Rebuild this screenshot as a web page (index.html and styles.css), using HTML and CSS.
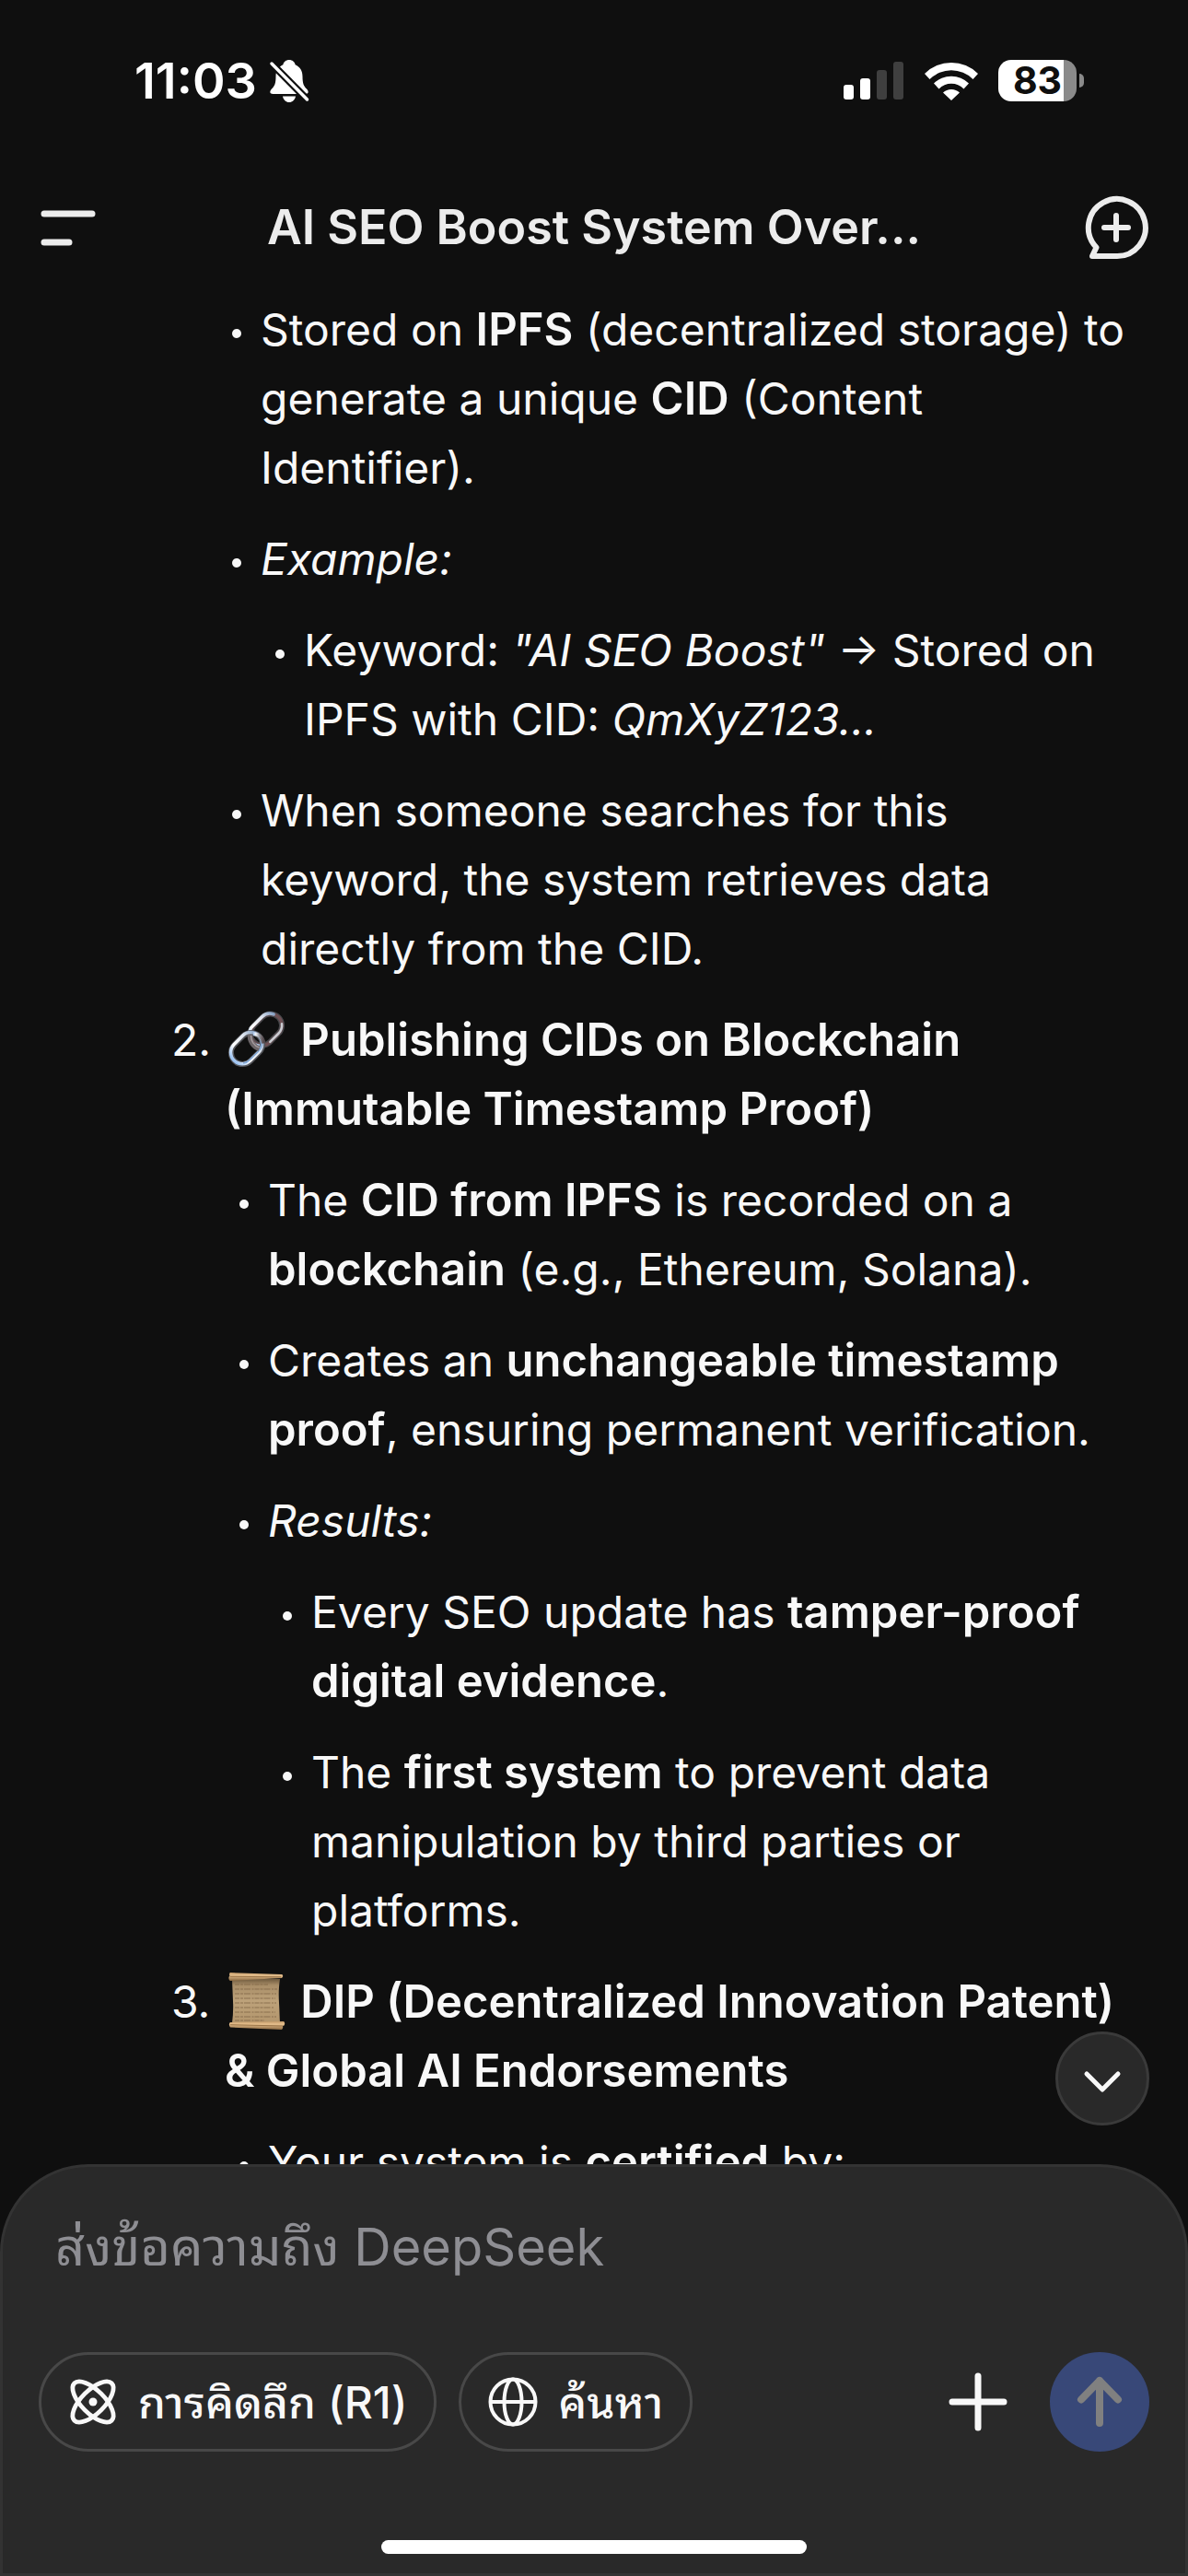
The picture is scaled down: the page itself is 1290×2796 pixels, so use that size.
FILE: index.html
```html
<!DOCTYPE html>
<html lang="th">
<head>
<meta charset="utf-8">
<meta name="viewport" content="width=device-width, initial-scale=1">
<title>AI SEO Boost System Overview</title>
<link rel="stylesheet" href="styles.css">
</head>
<body>
<div class="screen">
  <div class="status-bar">
    <div class="status-left">
      <span class="clock">11:03</span>
      <svg class="bell" viewBox="0 0 42 46" width="42" height="46" aria-hidden="true">
        <path fill="#fff" d="M21 0c-3.400 0-6 2.200-6.600 5.200C9 7.500 6.500 12 6.500 18c0 8-1.500 10.500-4.500 13.500C-.5 34-.3 37 3.500 37h35c3.800 0 4-3 1.500-5.500-3-3-4.500-5.500-4.500-13.500 0-6-2.500-10.500-7.900-12.800C27 2.200 24.400 0 21 0zM14 39.500h14c-.8 4-3.500 6.500-7 6.500s-6.200-2.500-7-6.500z"/>
        <path stroke="#0f0f0f" stroke-width="8" d="M0 2 42 44.500"/>
        <path stroke="#fff" stroke-width="3.500" stroke-linecap="round" d="M2 4 40.500 43"/>
      </svg>
    </div>
    <div class="status-right">
      <svg viewBox="0 0 66 42" width="66" height="42" aria-hidden="true">
        <rect x="0" y="25" width="11" height="16" rx="3" fill="#fff"/>
        <rect x="18" y="18" width="11" height="23" rx="3" fill="#fff"/>
        <rect x="36" y="9" width="11" height="32" rx="3" fill="#3f3f3f"/>
        <rect x="54" y="0" width="11" height="41" rx="3" fill="#3f3f3f"/>
      </svg>
      <svg viewBox="0 0 58 42" width="58" height="42" aria-hidden="true">
        <path fill="#fff" d="M0 13a41 41 0 0 1 58 0l-5.500 6a33.500 33.500 0 0 0-47 0zM10 23.500a27 27 0 0 1 38 0l-5.500 6a19 19 0 0 0-27 0zM20 33.500a13 13 0 0 1 18 0L29 42z"/>
      </svg>
      <div class="battery"><span class="battery-body">83</span><span class="battery-tip"></span></div>
    </div>
  </div>

  <header class="top-bar">
    <button class="icon-button" type="button" aria-label="Menu">
      <svg viewBox="0 0 60 40" width="60" height="40" fill="none" stroke="#ececec" stroke-width="7" stroke-linecap="round" aria-hidden="true"><path d="M4 5h52M4 36h27"/></svg>
    </button>
    <h1 class="title">AI SEO Boost System Over...</h1>
    <button class="icon-button" type="button" aria-label="New chat">
      <svg viewBox="0 0 72 72" width="72" height="72" fill="none" stroke="#ececec" stroke-width="6" stroke-linecap="round" stroke-linejoin="round" aria-hidden="true"><path d="M36 67H10l4.500-9.500A31 31 0 1 1 36 67zM36 23v26M23 36h26"/></svg>
    </button>
  </header>

  <main class="chat">
    <ol class="steps">
      <li class="step continued">
        <div class="step-body">
          <ul class="points">
            <li><div>Stored on <strong>IPFS</strong> (decentralized storage) to generate a unique <strong>CID</strong> (Content Identifier).</div></li>
            <li><div><em>Example:</em></div>
              <ul class="points">
                <li><div>Keyword: <em>"AI SEO Boost"</em> → Stored on IPFS with CID: <em>QmXyZ123...</em></div></li>
              </ul>
            </li>
            <li><div>When someone searches for this keyword, the system retrieves data directly from the CID.</div></li>
          </ul>
        </div>
      </li>
      <li class="step">
        <div class="step-body">
          <h2 class="step-title"><svg class="emoji" viewBox="0 0 62 62" width="62" height="62" fill="none" aria-hidden="true">
            <defs>
              <linearGradient id="steel" x1="0" y1="0" x2="1" y2="0">
                <stop offset="0" stop-color="#a9c8ee"/>
                <stop offset=".25" stop-color="#f4f6fa"/>
                <stop offset=".6" stop-color="#8f8f96"/>
                <stop offset="1" stop-color="#54484c"/>
              </linearGradient>
              <linearGradient id="steel-light" x1="0" y1="0" x2="1" y2="0">
                <stop offset="0" stop-color="#9ec4f2"/>
                <stop offset=".3" stop-color="#ffffff"/>
                <stop offset=".7" stop-color="#dfe6f0"/>
                <stop offset="1" stop-color="#8aa4c6"/>
              </linearGradient>
            </defs>
            <g transform="rotate(-45 41 20.500)">
              <rect x="22" y="8" width="38" height="25" rx="12.500" stroke="#46464a" stroke-width="6"/>
              <rect x="22" y="8" width="38" height="25" rx="12.500" stroke="#6e5054" stroke-width="3.500"/>
              <path d="M25 29.500A12.500 12.500 0 0 1 34.500 7.500h13a12.500 12.500 0 0 1 11 7" stroke="url(#steel-light)" stroke-width="3.500" stroke-linecap="round"/>
              <path d="M34.500 33h13a12.500 12.500 0 0 0 10-5" stroke="#c9ccd2" stroke-width="2.500" stroke-linecap="round"/>
            </g>
            <g transform="rotate(-45 20 41)">
              <rect x="1" y="28.500" width="38" height="25" rx="12.500" stroke="#55565b" stroke-width="6"/>
              <rect x="1" y="28" width="38" height="25" rx="12.500" stroke="url(#steel-light)" stroke-width="3.500"/>
              <path d="M6 49.500a12 12 0 0 0 7.500 2.500h13a11.500 11.500 0 0 0 10-6" stroke="#7fa6d6" stroke-width="1.500"/>
            </g>
            <path d="M23.500 26c-.5 7 3.500 13 10 15" stroke="#6b6568" stroke-width="5.500"/>
            <path d="M24.500 27c0 6 3.500 11.500 9 13" stroke="#a59a9d" stroke-width="1.500"/>
            <path d="M27 25c6 .5 10.500 4 11 10.500" stroke="url(#steel)" stroke-width="4"/>
          </svg> Publishing CIDs on Blockchain (Immutable Timestamp Proof)</h2>
          <ul class="points">
            <li><div>The <strong>CID from IPFS</strong> is recorded on a <strong>blockchain</strong> (e.g., Ethereum, Solana).</div></li>
            <li><div>Creates an <strong>unchangeable timestamp proof</strong>, ensuring permanent verification.</div></li>
            <li><div><em>Results:</em></div>
              <ul class="points">
                <li><div>Every SEO update has <strong>tamper-proof digital evidence</strong>.</div></li>
                <li><div>The <strong>first system</strong> to prevent data manipulation by third parties or platforms.</div></li>
              </ul>
            </li>
          </ul>
        </div>
      </li>
      <li class="step">
        <div class="step-body">
          <h2 class="step-title"><svg class="emoji" viewBox="0 0 62 62" width="62" height="62" aria-hidden="true">
            <defs>
              <linearGradient id="sheet" x1="0" y1="0" x2="0" y2="1">
                <stop offset="0" stop-color="#6f5a3e"/>
                <stop offset=".14" stop-color="#a98e68"/>
                <stop offset=".5" stop-color="#bda27a"/>
                <stop offset="1" stop-color="#b3966c"/>
              </linearGradient>
              <linearGradient id="roll" x1="0" y1="0" x2="0" y2="1">
                <stop offset="0" stop-color="#c39a68"/>
                <stop offset=".35" stop-color="#e6c08e"/>
                <stop offset="1" stop-color="#8a6840"/>
              </linearGradient>
            </defs>
            <path fill="url(#sheet)" d="M4 7h52c-1.500 10-1.500 18-1 26s.5 15 1 22H4c1-8 1.500-16 1-24S4.500 15 4 7z"/>
            <path stroke="#7d6344" stroke-width="1.400" stroke-dasharray="5 1 3 1 7 1.500 2 1" opacity=".5" d="M7 13h36M7 18h46M7 23h45M7 28h44M7 33h45M7 38h42M7 43h44M7 48h45M7 52h32"/>
            <path fill="url(#roll)" d="M2 0l56 2c2 1 1 3 0 4L2 9C0 8 0 4 1.500 4 .8 2.500 1 .5 2 0z"/>
            <path stroke="#9a7448" stroke-width="1" d="M2 4.300 57 4.800"/>
            <path fill="url(#roll)" d="M2 54l58-1c1.500 1 1.500 3 .5 4.500L59 58c.5 1.500 0 3.500-1.500 4L2 59.500C.5 58 .5 55 2 54z"/>
            <path stroke="#9a7448" stroke-width="1" d="M2 56.700 59 58"/>
          </svg> DIP (Decentralized Innovation Patent) &amp; Global AI Endorsements</h2>
          <ul class="points">
            <li><div>Your system is <strong>certified</strong> by:</div></li>
          </ul>
        </div>
      </li>
    </ol>
    <button class="scroll-down" type="button" aria-label="Scroll to bottom">
      <svg viewBox="0 0 42 32" width="42" height="32" fill="none" stroke="#f8f8f8" stroke-width="5" stroke-linecap="round" stroke-linejoin="round" aria-hidden="true"><path d="M4 11l17 17 17-17"/></svg>
    </button>
  </main>

  <form class="composer">
    <input class="message" type="text" aria-label="ส่งข้อความถึง DeepSeek" placeholder="ส่งข้อความถึง DeepSeek">
    <div class="tools">
      <button class="pill" type="button">
        <svg viewBox="0 0 54 54" width="54" height="54" fill="none" stroke="#f8f8f8" stroke-width="4.800" aria-hidden="true"><ellipse cx="27" cy="27" rx="28.600" ry="12.600" transform="rotate(45 27 27)"/><ellipse cx="27" cy="27" rx="28.600" ry="12.600" transform="rotate(-45 27 27)"/><circle cx="27" cy="27" r="4.500" fill="#f8f8f8" stroke="none"/></svg>
        <span>การคิดลึก (R1)</span>
      </button>
      <button class="pill" type="button">
        <svg viewBox="0 0 54 54" width="54" height="54" fill="none" stroke="#f8f8f8" stroke-width="4" aria-hidden="true"><circle cx="27" cy="27" r="24.500"/><ellipse cx="27" cy="27" rx="9.500" ry="24.500"/><path d="M3 27h48"/></svg>
        <span>ค้นหา</span>
      </button>
      <button class="icon-button add" type="button" aria-label="Add">
        <svg viewBox="0 0 64 64" width="64" height="64" stroke="#f8f8f8" stroke-width="7" stroke-linecap="round" aria-hidden="true"><path d="M32 4v56M4 32h56"/></svg>
      </button>
      <button class="send" type="submit" aria-label="Send">
        <svg viewBox="0 0 48 54" width="48" height="54" fill="none" stroke="#808080" stroke-width="8" stroke-linecap="round" stroke-linejoin="round" aria-hidden="true"><path d="M24 50V4M4 24.500 24 4l20 20.500"/></svg>
      </button>
    </div>
    <div class="home-indicator"></div>
  </form>
</div>
</body>
</html>
```
FILE: styles.css
```css
* {
  box-sizing: border-box;
}

body {
  margin: 0;
  background: #0f0f0f;
  color: #f8f8f8;
  font-family: Inter, "Noto Sans Thai Looped", Loma, "Noto Sans Thai", "Noto Sans", sans-serif;
  font-size: 48px;
  line-height: 75px;
}

button {
  display: flex;
  align-items: center;
  justify-content: center;
  margin: 0;
  padding: 0;
  border: 0;
  background: none;
  color: inherit;
  font: inherit;
}

svg {
  display: block;
  flex: none;
  overflow: visible;
}

.screen {
  display: flex;
  flex-direction: column;
  height: 100vh;
}

/* Status bar */
.status-bar {
  display: flex;
  align-items: center;
  justify-content: space-between;
  padding: 50px 113px 0 146px;
  color: #fff;
}

.status-left {
  display: flex;
  align-items: center;
  gap: 14px;
}

.clock {
  font-size: 54px;
  font-weight: 600;
}

.status-right {
  display: flex;
  align-items: center;
  gap: 22px;
}

.battery {
  display: flex;
  align-items: center;
  gap: 3px;
}

.battery-body {
  width: 85px;
  height: 45px;
  border-radius: 14px;
  background: linear-gradient(to right, #fff 84%, #8a8a8a 84%);
  color: #0f0f0f;
  font-size: 41px;
  font-weight: 700;
  line-height: 45px;
  text-align: center;
}

.battery-tip {
  width: 5px;
  height: 15px;
  border-radius: 0 5px 5px 0;
  background: #8a8a8a;
}

/* Title bar */
.top-bar {
  display: grid;
  grid-template-columns: 72px 1fr 72px;
  align-items: center;
  height: 195px;
  padding: 48px 42px 0;
}

.title {
  margin: 0;
  color: #ececec;
  font-size: 52px;
  font-weight: 600;
  text-align: center;
}

.top-bar .icon-button:first-child {
  justify-content: flex-start;
  padding-left: 2px;
}

/* Conversation */
.chat {
  position: relative;
  flex: 1;
  min-height: 0;
  overflow: hidden;
  padding: 0 48px 0 186px;
}

.steps,
.points {
  display: flex;
  flex-direction: column;
  gap: 24px;
  margin: 0;
  padding: 0;
  list-style: none;
}

.steps {
  counter-reset: step 1;
}

.step {
  display: grid;
  grid-template-columns: 58px 1fr;
}

.step:not(.continued) {
  counter-increment: step;
}

.step:not(.continued)::before {
  content: counter(step) ".";
}

.step.continued {
  grid-template-columns: 1fr;
  padding-left: 50px;
}

.step-body {
  display: flex;
  flex-direction: column;
  gap: 24px;
}

.step-title {
  margin: 0;
  font-size: 49px;
  font-weight: 600;
}

.emoji {
  display: inline-block;
  margin: 0 4px 0 4px;
  vertical-align: -13px;
}

.points > li {
  display: grid;
  grid-template-columns: 47px 1fr;
  row-gap: 24px;
}

.points > li::before {
  content: "";
  width: 10px;
  height: 10px;
  margin: 37px 0 0 16px;
  border-radius: 50%;
  background: #f8f8f8;
}

.points .points {
  grid-column: 2;
}

strong {
  font-size: 49px;
  font-weight: 600;
}

.scroll-down {
  position: absolute;
  right: 42px;
  bottom: 42px;
  width: 102px;
  height: 102px;
  border: 3px solid #3a3a3a;
  border-radius: 50%;
  background: #292929;
}

/* Message composer */
.composer {
  display: flex;
  flex-direction: column;
  padding: 45px 39px 21px;
  border: 3px solid #333;
  border-radius: 96px 96px 0 0;
  background: #292929;
}

.message {
  height: 84px;
  padding: 0 18px;
  border: 0;
  outline: 0;
  background: none;
  color: #f8f8f8;
  font: inherit;
  font-size: 56px;
}

.message::placeholder {
  color: #8e8e93;
  opacity: 1;
}

.tools {
  display: flex;
  align-items: center;
  gap: 24px;
  margin-top: 72px;
}

.pill {
  gap: 22px;
  height: 108px;
  padding: 0 29px;
  border: 3px solid #484848;
  border-radius: 54px;
  font-size: 48px;
  font-weight: 500;
}

.add {
  margin: 0 22px 0 auto;
}

.send {
  width: 108px;
  height: 108px;
  border-radius: 50%;
  background: #384878;
}

.home-indicator {
  align-self: center;
  width: 462px;
  height: 15px;
  margin-top: 96px;
  border-radius: 8px;
  background: #fff;
}
```
